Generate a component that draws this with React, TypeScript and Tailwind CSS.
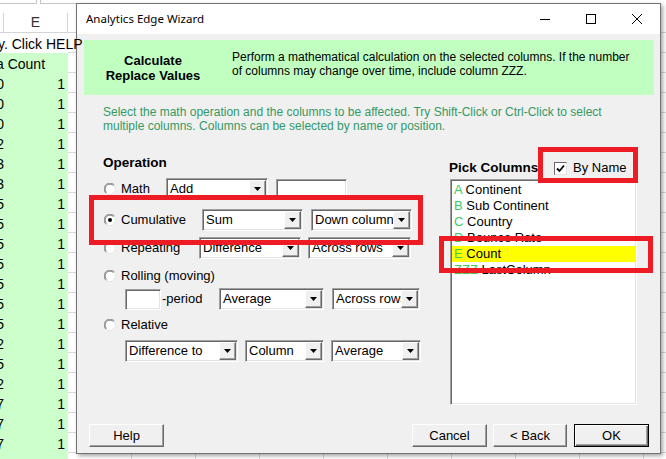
import React from "react";

const lastDigits = ["0", "0", "0", "2", "3", "3", "5", "5", "5", "5", "5", "5", "5", "2", "5", "2", "7", "7", "7", "7"];
const otherCols = [0, 1, 2, 3, 4, 5, 6, 7, 8, 9];

const sunken =
  "border border-t-[#a0a0a0] border-l-[#a0a0a0] border-b-white border-r-white shadow-[inset_1px_1px_0_#696969,inset_-1px_-1px_0_#e3e3e3]";
const raised =
  "border border-t-white border-l-white border-b-[#696969] border-r-[#696969] shadow-[inset_-1px_-1px_0_#a0a0a0]";

const Sheet = () => {
  return (
    <div className="flex flex-col font-['Liberation_Sans',Arial,sans-serif] text-[14px] text-black">
      <div className="h-[13px] flex shrink-0">
        <div className="w-[37px] h-[4px] border-b border-r border-[#c6c6c6]" />
        <div className="ml-[3px] w-[600px] h-[4px] border-b border-l border-[#c6c6c6]" />
      </div>

      {/* column header */}
      <div className="h-[20px] flex shrink-0">
        <div className="w-[4px] shrink-0 border-r border-b border-[#d5d5d5]" />
        <div className="w-[64px] shrink-0 border-r border-b border-[#d5d5d5] flex items-center justify-center text-[14px] text-[#333]">
          E
        </div>
        {otherCols.map((c) => (
          <div key={c} className="w-[64px] shrink-0 border-r border-b border-[#d5d5d5]" />
        ))}
      </div>

      {/* first row with overflowing note */}
      <div className="h-[20px] flex shrink-0">
        <div className="w-[4px] shrink-0 flex items-end relative z-10">
          <span className="ml-[-2px] whitespace-nowrap leading-[17px]">y. Click HELP</span>
        </div>
        <div className="w-[64px] shrink-0" />
        {otherCols.map((c) => (
          <div key={c} className="w-[64px] shrink-0 border-b border-[#dadada]" />
        ))}
      </div>

      {/* heading row */}
      <div className="h-[20px] flex shrink-0">
        <div className="w-[4px] shrink-0 bg-[#ccffcc] flex items-end relative z-10">
          <span className="ml-[-4px] whitespace-nowrap leading-[17px]">a Count</span>
        </div>
        <div className="w-[64px] shrink-0 bg-[#ccffcc]" />
        {otherCols.map((c) => (
          <div key={c} className="w-[64px] shrink-0 border-r border-b border-[#dadada]" />
        ))}
      </div>

      {lastDigits.map((d, i) => (
        <div key={i} className="h-[20px] flex shrink-0">
          <div className="w-[4px] shrink-0 bg-[#ccffcc] overflow-hidden flex justify-end items-end">
            <span className="leading-[17px] shrink-0">{d}</span>
          </div>
          <div className="w-[64px] shrink-0 bg-[#ccffcc] flex justify-end items-end pr-[3px]">
            <span className="leading-[17px]">1</span>
          </div>
          {otherCols.map((c) => (
            <div key={c} className="w-[64px] shrink-0 border-r border-b border-[#dadada]" />
          ))}
        </div>
      ))}
    </div>
  );
};

const Drop = ({ w, value }: { w: string; value: string }) => (
  <div className={`${w} h-[22px] shrink-0 flex bg-white ${sunken} p-[1px]`}>
    <div className="flex-1 min-w-0 overflow-hidden whitespace-nowrap pl-[2px] leading-[18px]">
      {value}
    </div>
    <div className={`w-[17px] h-full shrink-0 flex items-center justify-center bg-[#f0f0f0] ${raised}`}>
      <svg width="7" height="4" viewBox="0 0 7 4">
        <polygon points="0,0 7,0 3.5,4" fill="#000" />
      </svg>
    </div>
  </div>
);

const TextBox = ({ w }: { w: string }) => (
  <div className={`${w} h-[21px] shrink-0 bg-white ${sunken}`} />
);

const Radio = ({ checked }: { checked?: boolean }) => (
  <svg width="12" height="12" viewBox="0 0 12 12" className="shrink-0">
    <circle cx="6" cy="6" r="5.5" fill="#fff" stroke="#e3e3e3" />
    <path d="M1.8 10.2 A5.5 5.5 0 0 1 10.2 1.8" fill="none" stroke="#8a8a8a" strokeWidth="1" />
    <path d="M2.6 9.4 A4.6 4.6 0 0 1 9.4 2.6" fill="none" stroke="#696969" strokeWidth="0.8" />
    {checked && <circle cx="6" cy="6" r="2" fill="#000" />}
  </svg>
);

const Option = ({ label, w, checked }: { label: string; w: string; checked?: boolean }) => (
  <div className={`${w} shrink-0 flex items-center pl-[1px]`}>
    <Radio checked={checked} />
    <span className="ml-[5px] whitespace-nowrap">{label}</span>
  </div>
);

const Btn = ({ w, label, def }: { w: string; label: string; def?: boolean }) => (
  <div
    className={`${w} h-[23px] shrink-0 flex items-center justify-center bg-[#f0f0f0] ${
      def
        ? "border border-black shadow-[inset_1px_1px_0_#fff,inset_-1px_-1px_0_#696969,inset_-2px_-2px_0_#a0a0a0]"
        : raised
    }`}
  >
    {label}
  </div>
);

const columns = [
  { k: "A", name: "Continent" },
  { k: "B", name: "Sub Continent" },
  { k: "C", name: "Country" },
  { k: "D", name: "Bounce Rate" },
  { k: "E", name: "Count", on: true },
  { k: "ZZZ", name: "LastColumn" },
];

const Wizard = () => (
  <div className="absolute left-[76px] top-[3px] w-[585px] h-[451px] flex flex-col border border-[#737373] bg-[#f0f0f0] shadow-[2px_2px_4px_rgba(0,0,0,0.35)] font-['Liberation_Sans',Arial,sans-serif] text-[13px] text-black">
    {/* title bar */}
    <div className="h-[30px] shrink-0 flex items-center bg-white">
      <span className="pl-[9px] font-['Noto_Sans',sans-serif] text-[11.5px] text-black">Analytics Edge Wizard</span>
      <div className="ml-auto flex h-full">
        <div className="w-[46px] h-full flex items-center justify-center">
          <svg width="10" height="10" viewBox="0 0 10 10">
            <path d="M0 5.5 H10" stroke="#000" strokeWidth="1" />
          </svg>
        </div>
        <div className="w-[46px] h-full flex items-center justify-center">
          <svg width="10" height="10" viewBox="0 0 10 10">
            <rect x="0.5" y="0.5" width="9" height="9" fill="none" stroke="#000" strokeWidth="1" />
          </svg>
        </div>
        <div className="w-[46px] h-full flex items-center justify-center">
          <svg width="10" height="10" viewBox="0 0 10 10">
            <path d="M0 0 L10 10 M10 0 L0 10" stroke="#000" strokeWidth="1" />
          </svg>
        </div>
      </div>
    </div>

    {/* green header */}
    <div className="mt-[6px] ml-[7px] mr-[6px] h-[55px] shrink-0 flex bg-[#c0ffc0]">
      <div className="w-[138px] shrink-0 flex flex-col items-center justify-center font-bold leading-[15px] text-[13px]">
        <span>Calculate</span>
        <span>Replace Values</span>
      </div>
      <div className="ml-[10px] pt-[10px] text-[12px] leading-[14px]">
        Perform a mathematical calculation on the selected columns. If the number
        <br />
        of columns may change over time, include column ZZZ.
      </div>
    </div>

    {/* instruction */}
    <div className="mt-[10px] ml-[26px] text-[12px] leading-[14px] text-[#339966]">
      Select the math operation and the columns to be affected. Try Shift-Click or Ctrl-Click to select
      <br />
      multiple columns. Columns can be selected by name or position.
    </div>

    {/* main area */}
    <div className="mt-[22px] ml-[26px] flex">
      <div className="w-[346px] shrink-0 flex flex-col">
        <div className="h-[16px] leading-[16px] font-bold text-[13.5px]">Operation</div>

        <div className="mt-[7px] h-[22px] flex items-center">
          <Option label="Math" w="w-[63px]" />
          <Drop w="w-[102px]" value="Add" />
          <div className="ml-[8px]">
            <TextBox w="w-[71px]" />
          </div>
        </div>

        <div className="mt-[9px] h-[22px] flex items-center">
          <Option label="Cumulative" w="w-[99px]" checked />
          <Drop w="w-[101px]" value="Sum" />
          <div className="ml-[8px]">
            <Drop w="w-[101px]" value="Down columns" />
          </div>
        </div>

        <div className="mt-[6px] h-[22px] flex items-center">
          <Option label="Repeating" w="w-[96px]" />
          <Drop w="w-[102px]" value="Difference" />
          <div className="ml-[7px]">
            <Drop w="w-[103px]" value="Across rows" />
          </div>
        </div>

        <div className="mt-[9px] h-[16px] flex items-center">
          <Option label="Rolling (moving)" w="w-[200px]" />
        </div>

        <div className="mt-[4px] h-[22px] flex items-center pl-[22px]">
          <TextBox w="w-[36px]" />
          <span className="w-[58px] shrink-0 pl-[1px]">-period</span>
          <Drop w="w-[105px]" value="Average" />
          <div className="ml-[8px]">
            <Drop w="w-[88px]" value="Across rows" />
          </div>
        </div>

        <div className="mt-[7px] h-[16px] flex items-center">
          <Option label="Relative" w="w-[200px]" />
        </div>

        <div className="mt-[7px] h-[22px] flex items-center pl-[22px]">
          <Drop w="w-[113px]" value="Difference to" />
          <div className="ml-[7px]">
            <Drop w="w-[79px]" value="Column" />
          </div>
          <div className="ml-[7px]">
            <Drop w="w-[90px]" value="Average" />
          </div>
        </div>
      </div>

      <div className="pt-[5px] flex flex-col">
        <div className="h-[16px] flex items-center">
          <span className="w-[105px] shrink-0 font-bold text-[13.5px]">Pick Columns</span>
          <div className="w-[13px] h-[13px] bg-white border border-t-[#696969] border-l-[#696969] border-b-[#e3e3e3] border-r-[#e3e3e3] flex items-center justify-center">
            <svg width="9" height="9" viewBox="0 0 9 9">
              <path d="M1 4.5 L3.5 7 L8 1.5" fill="none" stroke="#000" strokeWidth="1.8" />
            </svg>
          </div>
          <span className="ml-[6px]">By Name</span>
        </div>
        <div className={`mt-[3px] ml-[1px] w-[187px] h-[226px] bg-white ${sunken} pt-[2px] px-[1px]`}>
          {columns.map((c) => (
            <div
              key={c.k}
              className={`h-[16px] leading-[16px] pl-[2px] whitespace-nowrap ${c.on ? "bg-[#ffff00]" : ""}`}
            >
              <span className="text-[#3dcc5a]">{c.k}</span> {c.name}
            </div>
          ))}
        </div>
      </div>
    </div>

    {/* buttons */}
    <div className="mt-[19px] flex">
      <div className="ml-[12px]">
        <Btn w="w-[75px]" label="Help" />
      </div>
      <div className="ml-auto flex gap-[6px] mr-[11px]">
        <Btn w="w-[75px]" label="Cancel" />
        <Btn w="w-[74px]" label="< Back" />
        <div className="ml-[1px]">
          <Btn w="w-[75px]" label="OK" def />
        </div>
      </div>
    </div>
  </div>
);

export default function App() {
  return (
    <div className="relative w-[666px] h-[459px] overflow-hidden bg-white">
      <Sheet />
      <Wizard />
      {/* red annotation boxes */}
      <div className="absolute left-[89px] top-[195px] w-[334px] h-[50px] border-[5px] border-[#ed1c24]" />
      <div className="absolute left-[538px] top-[147px] w-[100px] h-[36px] border-[5px] border-[#ed1c24]" />
      <div className="absolute left-[439px] top-[236px] w-[214px] h-[37px] border-[5px] border-[#ed1c24]" />
    </div>
  );
}
